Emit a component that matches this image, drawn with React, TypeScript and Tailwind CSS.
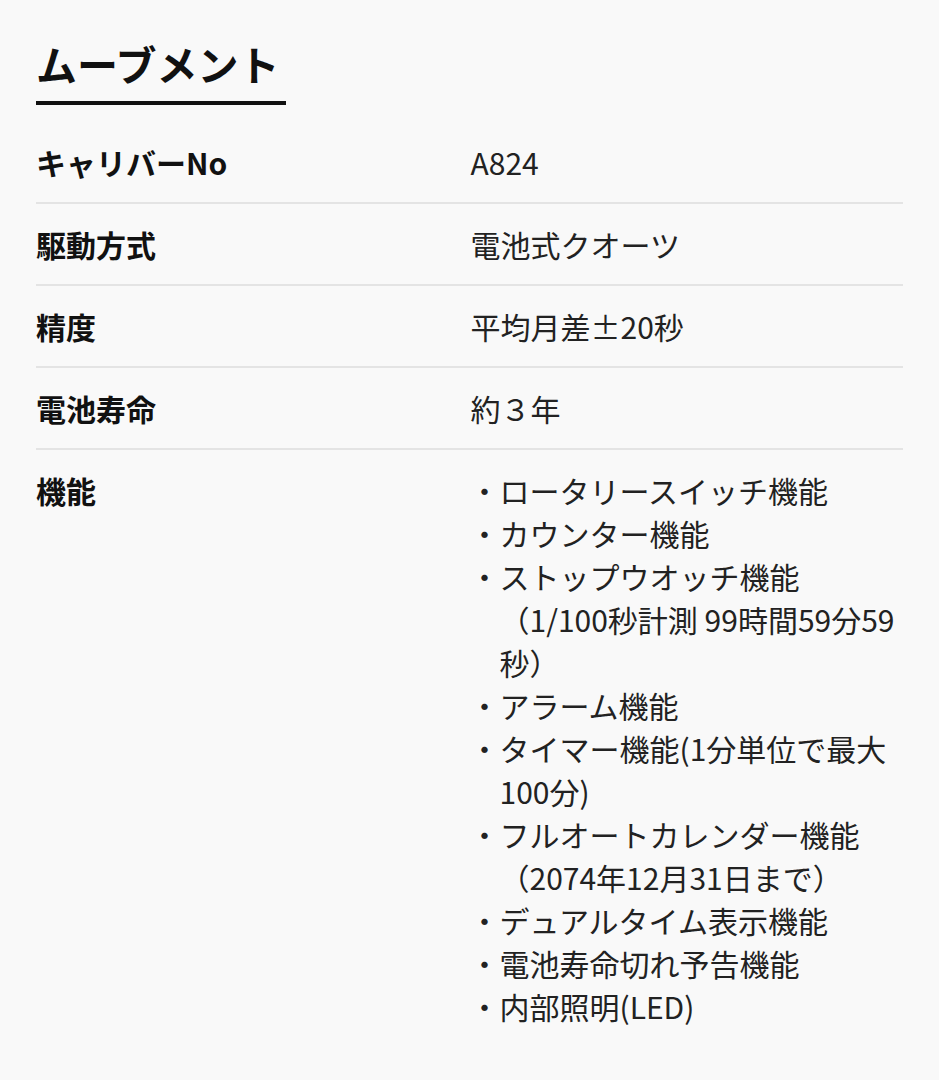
import React from "react";

const rows: { label: string; value: string }[] = [
  { label: "キャリバーNo", value: "A824" },
  { label: "駆動方式", value: "電池式クオーツ" },
  { label: "精度", value: "平均月差±20秒" },
  { label: "電池寿命", value: "約３年" },
];

const features: React.ReactNode[] = [
  "ロータリースイッチ機能",
  "カウンター機能",
  <>
    ストップウオッチ機能
    <br />
    （1/100秒計測 99時間59分59秒）
  </>,
  "アラーム機能",
  "タイマー機能(1分単位で最大100分)",
  <>
    フルオートカレンダー機能
    <br />
    （2074年12月31日まで）
  </>,
  "デュアルタイム表示機能",
  "電池寿命切れ予告機能",
  "内部照明(LED)",
];

export default function App() {
  return (
    <div
      className="min-h-[1080px] w-full bg-[#f9f9f9] px-9 pt-[33px] text-[#1a1a1a]"
      style={{ fontFamily: '"Noto Sans CJK JP", "Noto Sans", sans-serif' }}
    >
      <h2 className="inline-block w-[250px] border-b-[4px] border-[#111] pb-[8px] text-[41px] font-bold leading-[60px] text-[#111]">
        ムーブメント
      </h2>
      <div className="mt-[17px]">
        {rows.map((r) => (
          <div
            key={r.label}
            className="grid grid-cols-2 border-b-2 border-[#e4e4e4] pt-[19px] pb-[18px] text-[30px] leading-[43px]"
          >
            <div className="font-bold text-[#111]">{r.label}</div>
            <div className="pl-[1px] text-[#222]">{r.value}</div>
          </div>
        ))}
        <div className="grid grid-cols-2 pt-[19px] pb-[18px] text-[30px] leading-[43px]">
          <div className="font-bold text-[#111]">機能</div>
          <ul className="text-[#222]">
            {features.map((f, i) => (
              <li key={i} className="flex">
                <span className="w-[30px] shrink-0">・</span>
                <span className="min-w-0 flex-1">{f}</span>
              </li>
            ))}
          </ul>
        </div>
      </div>
    </div>
  );
}
